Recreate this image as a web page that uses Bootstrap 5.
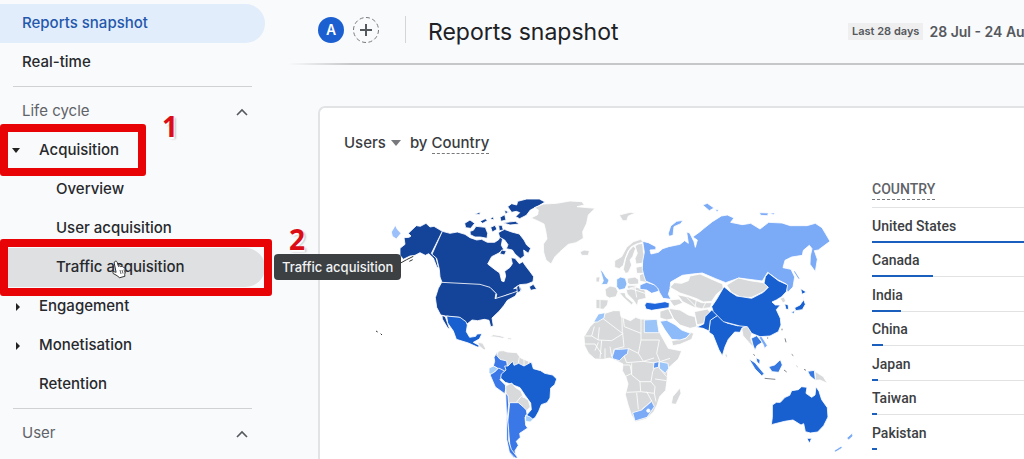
<!DOCTYPE html>
<html lang="en">
<head>
<meta charset="utf-8">
<meta name="viewport" content="width=device-width, initial-scale=1">
<title>Reports snapshot</title>
<link href="https://cdn.jsdelivr.net/npm/bootstrap@5.3.0/dist/css/bootstrap.min.css" rel="stylesheet">
<style>
body{font-family:Inter,"Liberation Sans",sans-serif;background:#f9fafc;color:#202124;font-size:15px}
button{font:inherit;color:inherit;background:none;border:0;padding:0}
.side{flex:0 0 288px;padding-top:4px}
.side-row{display:flex;align-items:center;height:39px;width:265px;padding-left:22px;color:#27292c;text-decoration:none;font-weight:500;position:relative;border-radius:0 20px 20px 0;white-space:nowrap}
.side-row.current{background:#e2edfb;color:#2458ac}
.side-row.level1{padding-left:39px}
.side-row.level2{padding-left:56px}
.side-row.hovered{background:#dfe0e2}
.side-head{color:#5f6368;font-weight:400;justify-content:space-between;padding-right:16px}
.tri{position:absolute;left:12px}
.side-line{width:239px;margin:4px 0 5px 13px;border-top:1px solid #cfd1d4}
.mark-box{position:absolute;left:0;border:8px solid #e80406;border-radius:3px;pointer-events:none}
.box-a{top:-7px;width:146px;height:52px}
.box-b{top:-9px;width:272px;height:57px}
.step{position:absolute;font:700 28px/32px "Open Sans",sans-serif;color:#dc0c14;text-shadow:1px 2px 1px #fff,2px 2px 2px #8889}
.step-a{left:162px;top:-21px}
.step-b{left:289px;top:-25px}
.tip{position:absolute;left:274px;top:6px;height:26px;padding:0 8px;border-radius:4px;background:#3c4043;color:#f1f3f4;font:500 13px/26px Inter,sans-serif;z-index:3}
.hand{position:absolute;left:111px;top:12px}
.topbar{height:63px;padding-left:30px}
.topbar-line{height:2px;background:linear-gradient(90deg,#c5c7ca00,#c5c7ca 64px)}
.avatar{width:26px;height:26px;background:#1b5fd0;color:#fff;font-size:14px;font-weight:600}
.vline{width:1px;height:27px;background:#d3d5d8;margin:0 22px 0 25px}
.title{font-size:23px;line-height:30px;font-weight:400}
.range{flex:0 0 176px;overflow:hidden;white-space:nowrap;color:#55585c;font-weight:600;font-size:14px}
.chip{background:#efeff0;font-size:11px;line-height:17px;padding:0 4px;margin-right:6px}
.panel{margin:41px 0 0 30px;border:2px solid #e1e3e5;border-width:2px 0 0 2px;border-radius:7px 0 0 0;background:#fff;padding:20px 0 0 24px;min-height:400px}
.panel-title{height:30px;font-weight:500;color:#3a3c3f}
.dash{border-bottom:1px dashed #77797c;line-height:20px}
.map-box{min-width:0;padding:32px 16px 0 32px}
.map-box svg{display:block;width:100%}
.countries{flex:0 0 152px;font:500 14px/20px Roboto,sans-serif;color:#3c4043}
.countries table{width:100%;height:292px;border-collapse:separate;border-spacing:0}
.countries th{height:50px;vertical-align:bottom;padding:0 0 8px;box-shadow:inset 0 -1px #e0e2e4;font-weight:500;color:#5f6368}
.countries td{vertical-align:bottom;padding:0;box-shadow:inset 0 -1px #e0e2e4}
.countries tr:last-child td{box-shadow:none}
.meter-bar{height:2px;margin-top:5px;background:#1b5fbe}
</style>
</head>
<body>
<div class="d-flex vh-100 overflow-hidden">
<nav class="side" aria-label="Reports">
  <a href="#" class="side-row current">Reports snapshot</a>
  <a href="#" class="side-row">Real-time</a>
  <div class="side-line"></div>
  <button class="side-row side-head">Life cycle<svg width="14" height="10" viewBox="0 0 14 10" fill="none" stroke="#55585c" stroke-width="1.6"><path d="M2 8l5-5 5 5"/></svg></button>
  <a href="#" class="side-row level1"><svg class="tri" width="8" height="5" viewBox="0 0 8 5"><path d="M0 0h8L4 5z" fill="#222"/></svg>Acquisition<span class="mark-box box-a"></span><span class="step step-a">1</span></a>
  <a href="#" class="side-row level2">Overview</a>
  <a href="#" class="side-row level2">User acquisition</a>
  <a href="#" class="side-row level2 hovered">Traffic acquisition<span class="mark-box box-b"></span><span class="step step-b">2</span><span class="tip" role="tooltip">Traffic acquisition</span>
    <svg class="hand" width="17" height="19" viewBox="0 0 17 19"><path d="M4 1.5c1-.8 2 0 2.3 1l1.2 4 1-.6 1.3.7 1.4-.3.9.9 1.5.1.9 4-.8 3.2.2 1.8-5.6 1.5-1.6-1.8-4.5-2.5c-1-1 0-2 1.2-1.7l1.7.5L3.2 3C3 2.300 3.300 1.800 4 1.500z" fill="#fff" stroke="#333" stroke-width="1"/><path d="M9 10l1 4m1-4l1 3.500m1-4l.8 3" stroke="#444" stroke-width=".8"/></svg></a>
  <a href="#" class="side-row level1"><svg class="tri ms-1" width="5" height="8" viewBox="0 0 5 8"><path d="M0 0v8l4-4z" fill="#222"/></svg>Engagement</a>
  <a href="#" class="side-row level1"><svg class="tri ms-1" width="5" height="8" viewBox="0 0 5 8"><path d="M0 0v8l4-4z" fill="#222"/></svg>Monetisation</a>
  <a href="#" class="side-row level1">Retention</a>
  <div class="side-line"></div>
  <button class="side-row side-head">User<svg width="14" height="10" viewBox="0 0 14 10" fill="none" stroke="#55585c" stroke-width="1.6"><path d="M2 8l5-5 5 5"/></svg></button>
</nav>
<main class="flex-grow-1 overflow-hidden">
  <header>
    <div class="topbar d-flex align-items-center">
      <button class="avatar rounded-circle flex-shrink-0 lh-1 mb-1">A</button>
      <button class="ms-2 lh-1 mb-1" aria-label="Add comparison"><svg width="28" height="28" viewBox="0 0 28 28" fill="none" stroke="#77797c"><circle cx="14" cy="14" r="12.500" stroke-dasharray="4 2.500"/><path d="M14 8v12M8 14h12" stroke="#55585c" stroke-width="2"/></svg></button>
      <div class="vline mb-1"></div>
      <h1 class="title mb-0 text-nowrap">Reports snapshot</h1>
      <div class="range ms-auto d-flex align-items-center"><span class="chip">Last 28 days</span>28 Jul - 24 Au</div>
    </div>
    <div class="topbar-line"></div>
  </header>
  <section class="panel">
    <div class="panel-title d-flex align-items-center">
      <button class="d-flex align-items-center">Users<svg class="ms-1 me-2" width="12" height="6" viewBox="0 0 12 6"><path d="M1 0h10L6 6z" fill="#77797c"/></svg></button>
      <span>by <button class="dash">Country</button></span>
    </div>
    <div class="d-flex">
      <div class="map-box flex-grow-1">
      <svg viewBox="1128 570 1440 807" role="img" aria-label="Users by country" stroke="#fff" stroke-width="2.500" stroke-linejoin="round">
        <!-- North America -->
        <g transform="translate(1110 570)" fill="#14439a">
          <path d="M90 175l15-12-3-20 15-1 6-4-8-8 24-23 12 2 17-9 12 11 12-2 25 15-33 66 14 12 8 33-5-3-11-28-14-13-10 5-16-8-15 8-15 2-20 10-10-12z"/>
          <path d="M217 124l23 6 22-4 23 7 15 10 20 7 15-2 17 9 22 0 12-8 4-9 8 4-4 22 7 12-16 12-20 10-12 22 22 17 14 10 6 24 7 2 5-17-3-14 16-12 7-11-4-18 12 2 13 16 10-6 9 13 13 17 11 15-2 15-18 7-22 2-18 12 20-4 5 9-22 8-22 5-35 16 3-17-18-18-30-9-115-6-7-19-2-23-8-33-14-12z"/>
          <path d="M215 277l115 6 30 9 18 18-3 16 35-11 34-12-8 15-24 13-10 15-14 17-22 21 4 24-8 2-5-19-14-3-20 4-17-2-16 13-5-8-18-13-25-2-15-2-15-3-12-23-4-29 9-28z"/>
          <path fill="#1860d0" d="M230 378l40 4 18 13 4 10-3 20 10 17 18-3 4-7 15-1-8 16-18 10 22 12-10 2-27-12-36-11-9-25-17-24z"/>
          <path d="M216 376l10 4 13 38-6-4-16-27z"/>
          <path d="M385 128l18-10 22 8 23 6 14 18 8 15 12 10-7 15-14-10 2 18-12 8-16-14-8-12-18-4 5-12-10-14-15-8z"/>
          <path d="M413 50l12-9 15 4 3-11 27-7 38 0 17 9-20 12-24 12-12 16-20 10-12-6 12-12-10-4-14 3z"/>
          <path d="M300 124l10-3 8-12 28 3 7 18-2 15-20-4-16 0-14-7zM284 100l16-10 14 10-12 15-15-2z"/>
          <path d="M314 72l18-6-4 8zM330 94l16-8 6 6-14 8zM360 86l10-6 2 10zM390 82l14-8 4 16-15 4zM398 98l38-4 12 8-28 3zM362 112l13-6 6 12-14 8zM386 106l10 0 4 14-12 2zM404 60l12 6-10 6zM478 290l12-7 10 14-18 4zM440 290l8-4 4 18-10 4zM395 180l14 3-6 12-14-4z"/>
          <path fill="#9bc0fa" d="M64 126l12-20 6 12 11 12-14 17-12-8z"/>
          <path fill="none" stroke="#333" stroke-width="3" d="M92 219l18-10 20-10M118 214l10-5M18 423l5 3M32 431l4 4"/>
        </g>
        <!-- Greenland, Iceland, Svalbard -->
        <g transform="translate(1440 570)" fill="#d8d9da">
          <path d="M153 84l20-10 2-14-12-7 27-11 40-2 40-7 36 2 7 10-22 5 54 5-20 20-5 25-12 25 2 20-22 13-23 5-25 22-15 15-12 22-15-12-7-23-1-25 11-15-4-25-5-20-20-10z"/>
          <path d="M300 186l12-6 16 2-3 14-20 0zM418 75l32-8 18 1-23 10-5 14-12 0z"/>
        </g>
        <!-- South America -->
        <g transform="translate(1410 960)" fill="#d8d9da">
          <path d="M22 66l16 4 10 18-6 2-14-12zM60 50l10-6 20 3 16 5-8 3-22-4zM114 53l12 2-4 4-10-1z"/>
          <path d="M86 93l14-1 12 4 28 2 12 16 24 10 12 4 2 14-15 2-16-7-17 4-18-5-12 12-10-15-20-10-4-14z"/>
          <path fill="none" d="M148 112l-4 22M162 118v20M176 124l-2 18"/>
          <path fill="#3b78e7" d="M84 92l-4 14 10 12 20 5 2 16-2 22-15-9-25-14 4-14-2-12z"/>
          <path fill="#a4cdf8" d="M57 144l14-6 14 8-12 10-8 10-8-8z"/>
          <path fill="#3b78e7" d="M60 164l14-8 12-12 18 9-2 10-12 16 16 16 2 10-4 16-28-20z"/>
          <path fill="#1860d0" d="M104 138l10 0 14-14 4 12 14-6 16 8 22-12 6 20 22 6 12 8 24 5 12 12-6 17-12 10-2 30-9 14-17 6-8 20-10 18-12 9-14-16 14-16-2-20-16-22-16-24-28-11-16-5-14-13 2-12 14-12z"/>
          <path d="M107 198l18-9 12 14 16 10 6 16 16 12 6 20-12 12-12-9-10-14-10 2-22-2-7-12z"/>
          <path fill="none" d="M138 248l16-19 8 4"/>
          <path fill="#3b78e7" d="M119 248l26 0 14 12 10 10 2 12-6 10 2 24 6 8-18 12-6 4 2 12-12 12 6 12-10 16 2 14-6 8-12-16 0-30-6-60 4-40z"/>
          <path fill="#3b78e7" d="M107 218l7 10 2 26-4 40 4 36 0 32 8 26 20 26-8 0-18-18-8-38 0-60z"/>
          <path fill="#a4cdf8" d="M167 286l12 4 10 8-8 8-14-2z"/>
        </g>
        <!-- Africa -->
        <g transform="translate(1410 960)" fill="#d8d9da">
          <path d="M342 50l18-30 15-15 25-10 5-15 25-8 20 0 3 18 28 12 16-10 15 5 45 2 13 41 25 45 40 8-10 24-31 28-3 36-4 30-18 19-8 25-10 20-22 22-33 9-12-22-10-30-8-30 8-32-6-20-11-20 2-20-20-10-20-8-20 4-24-1-20-18-11-22z"/>
          <path fill="none" d="M345 48h20l8-28M388 22l-4 38M365 48l20 12 40 2 35-22M385-15l72 55-2-70M458-20l5 40 50 20M458 40l4 40-30 8-5 32M513-5v65h55M513 60l-8 40 15 24 32-10M475 85l30 15M462 108l8 20 50-4M375 92l10-25M345 72l30 0 20 30M395 60l-5 55M405 85v30M420 80l5 30M460 135h20l5 25-20 10M485 130v35l25 20 2 30-42 2M520 124l40 6-12 25-5 30-35 0M543 185l12 15-2 20-41-5M568 145l22 25M590 182l-35-5M500 218l5 50M530 215l15 28-30 26M553 220l5 25M568 60l-8 40 10 25M570 125l30-10"/>
          <path fill="#9bc4f8" d="M371 6l14-24 20-4-3 16-20 12zM523 0l38-2 6 40H523zM568 125l26 5 2 15-10 15-18-15z"/>
          <path fill="#7baaf7" d="M427 110l7-22 18 0 23-2-3 16-8 4-16 16-20-6zM488 278l27-8 30-26 8 16-22 32-36 11z"/><circle cx="535" cy="272" r="5" fill="#fff"/>
          <path fill="#5d94f0" d="M552 128l15-3-2 17-15 3z"/>
        </g>
        <!-- Europe -->
        <g transform="translate(1740 570)" fill="#d8d9da">
          <path d="M104 232l0-20 21-12 15-28 20-17 22-7 8 8-20 6-16 8-10 14-8 20-6 22-12 10zM132 228l5-23 10-23 13-14 7 7-9 25-8 10 5 15-10 23-9 2-6-12zM165 168l10-6 13-2 2 25 7 20-12 15-17 2-3-17 7-15zM168 232l20-4 4 22-22 0zM142 265l23-4 11 8 0 13-26 2-8-6zM178 255l17-7 15 17-10 12-20-3zM75 298l15-10 18 4 6 13-6 15-20 4-10-6zM48 328l37 2-3 15-12 13-22-3zM118 308h17l3 12 22 18-5 7-25-23zM138 298l27-8 30 10 3 25-23 5-3 18-12-18-18-18zM48 262l12-2-2 16H48zM142 286h28l-4 8-24 5z"/>
          <path fill="none" d="M150 295l45 15M165 292l5 30M60 330v26"/>
          <path fill="#8bb9f6" d="M60 236l10 12 8 14 9 8-5 13-18 1 6-12-4-14zM110 268l12-7 14 4 5 17-6 14-17 4-8-10z"/>
          <path fill="#7baaf7" d="M180 285l20-8 25 8 16 7-6 12-20 6-15-10-20-2z"/>
          <path fill="#1f66dc" d="M194 345l6-8 25 3 30-5 13 4-1 14-27 4-25 4-17-4z"/>
          <path fill="#7baaf7" d="M265 130l7-22 18-14 19-3-7 10-20 9-3 26-12 3z"/>
        </g>
        <!-- Middle East, South Asia, Oceania -->
        <g transform="translate(1980 900)" fill="#d8d9da">
          <path d="M26 25l34 5 25 15 20 5 6 30-21 5-30-10-20-20zM103 35l40-8 7 10-20 34-19 3zM0 34l25-8 15 30-20 4-20-6zM35 122l43-7 14-18 9 3-6 18-35 15-22 4zM38 290l22-26 3 16-15 33-14-2zM245 85l20-10 10 25-3 15 10 28-16-16-17-20zM465 214l25 16 12 20-22-10-14 1zM198 160l5 8-5 5-3-8z"/>
          <path fill="#8dbaf8" d="M0 64l20-3 25 13 20 16 26 10-13 14-18 6-25-2-20-28z"/>
          <g fill="#3678df"><path d="M274 115l16-8 17 20-16 10-6 14-6-16zM288 173l12 6-1 14-8-7zM267 177l18 11 28 34-8 5-20-20zM326 200l18-5 17-16 6 16-11 22-20-2zM443 214l20-3 3 30-16-13z"/></g>
          <path fill="#7baaf7" d="M296 98l10-4-2 14 18 28-8 10-4-12-12-20zM522 452l22-14 3 6-20 12zM560 414l16-14 3 8-13 12z"/>
          <g fill="#1860d0"><path d="M337 315l12-8 12 0 14-15 14-6 6-14 20-3 10-9 16 2-3 18 17 12 10-7 3-25 9 14 8 25 17 24 2 28-13 26-18 19-22 3-15-4-5-24-8 4-24-15-25 4-40 10 3-22zM441 415l14 0-7 15zM150 60l25-16 16 18 50 14 22-12 5 12-22 8-6 13-16-1-19 22-10 22-8 27-10-17-12-30-6-15-12-8z"/><path d="M109 82l22-10 4-22 20-20 12 2 6 14-22 15-4 32-18-8z"/></g>
          <path fill="#a9c9fa" d="M184 58l10-4 44 16-3 8-34-9zM244 72l14-6 10 6-16 6z"/>
          <path fill="none" stroke="#838790" stroke-width="3" d="M314 235l32 3M375 115l3 12M395 163l5 4M372 210l8 6M432 208l6 3M280 163l5 4M323 112l0 4M366 86l0 5M410 198l2 2"/>
        </g>
        <!-- Russia and East Asia -->
        <g transform="translate(2100 570)">
          <path fill="#7baaf7" d="M-172 154l17 4 23 12-1 9-17 1 3 12 22-5 13-11 18-6 34-7 14-11 11 8-5-34 9 3 13 26 4 17 6-22-14-9 22-16 12-10 25-20 27-17 18-3 20 9-10 13 35 7 25-4 28 17 26-20 40 2 25 8 50 0 25-7 20 13 10 17 14 24-19 14-16 12-12 2 9 26-6 37-16-22 1-25 5-22-8-10-18 15-3 15-32 5-20 10-6 22 24 5 11 23-5 30-14 14-5-3-1-20-26-13-30-22-16 26-70-9-40 14-30-12-40-17-30 3-30 4-35 20-2 20-5 17 8 15-24-3-10-17-6-14-11-10-25-11-5-15-5-20 1-25 5-26zM8 45l14-5 20 14-14 8zM46 58l10 2-5 7zM178 68l28 1-4 8-20-1zM208 69l18 0-6 5z"/>
          <path fill="#d8d9da" d="M-90 292l13-14 22 2 20-8 5-14 30-6 40 18 28 12 2 14-20 16-15 22-25 2-20-10-25-9-25-8zM-68 314l33 7 40 17 31 0-5 15-26 3-25-5-32-16zM-92 330l30-3 10 12-26 10zM80 285l35-21 35 8 40 6 15 12-15 15-35 17-33 0-28-15zM240 325l12-4 5 12-8 6z"/>
          <path fill="none" d="M-40 322l30 30M-10 326l-5 24M18 336l-10 20"/>
          <path fill="#1860d0" d="M72 290l18 15 20 13 45 7 35-18 15-15-13-12 4-20 9-11 30 23 28 13-4 20-14 15-16 10-13 6 10 9 15 0-12 14 12 26 2 20-8 20-25 13-30 2-25-10-13-20-22-2-50-13-30-30-5-15 15-22z"/>
          <path fill="#1860d0" d="M284 353l16-8 12-17-5-10 9 25-9 16-20 3zM302 296l17 10-13 7zM254 342l10 2 2 14-8 0zM274 366l10-4-3 9z"/>
          <path fill="none" stroke="#7baaf7" stroke-width="3" d="M283 244l14 22"/>
        </g>
      </svg>
      </div>
      <div class="countries">
        <table>
          <thead><tr><th scope="col"><span class="dash d-inline-block">COUNTRY</span></th></tr></thead>
          <tbody>
            <tr><td>United States<div class="meter-bar" style="width:100%"></div></td></tr>
            <tr><td>Canada<div class="meter-bar" style="width:40%"></div></td></tr>
            <tr><td>India<div class="meter-bar" style="width:19%"></div></td></tr>
            <tr><td>China<div class="meter-bar" style="width:7%"></div></td></tr>
            <tr><td>Japan<div class="meter-bar" style="width:4%"></div></td></tr>
            <tr><td>Taiwan<div class="meter-bar" style="width:3%"></div></td></tr>
            <tr><td>Pakistan<div class="meter-bar" style="width:3%"></div></td></tr>
          </tbody>
        </table>
      </div>
    </div>
  </section>
</main>
</div>
<script src="https://cdn.jsdelivr.net/npm/bootstrap@5.3.0/dist/js/bootstrap.bundle.min.js"></script>
</body>
</html>
